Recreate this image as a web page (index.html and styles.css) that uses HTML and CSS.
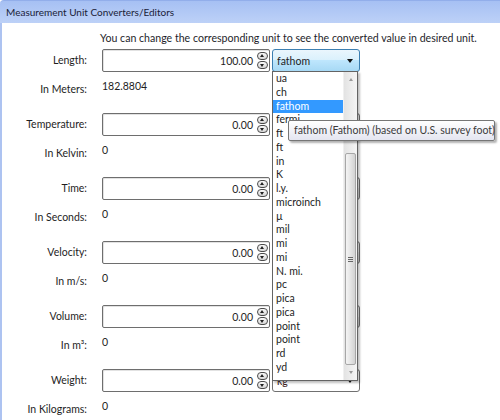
FILE: index.html
```html
<!DOCTYPE html>
<html>
<head>
<meta charset="utf-8">
<link rel="stylesheet" href="styles.css">
</head>
<body>
<div class="window">
  <div class="titlebar">Measurement Unit Converters/Editors</div>
  <div class="content">
    <p class="hint">You can change the corresponding unit to see the converted value in desired unit.</p>
    <div class="form">
      <div class="label">Length:</div>
      <div class="numbox"><span class="val">100.00</span><span class="spin"><span class="sbtn up"></span><span class="sbtn dn"></span></span></div>
      <div class="combo active"><span class="ctext">fathom</span><span class="arrow"></span></div>
      <div class="label sub">In Meters:</div>
      <div class="result">182.8804</div>
      <div></div>

      <div class="label">Temperature:</div>
      <div class="numbox"><span class="val">0.00</span><span class="spin"><span class="sbtn up"></span><span class="sbtn dn"></span></span></div>
      <div class="combo"><span class="ctext"></span><span class="arrow"></span></div>
      <div class="label sub">In Kelvin:</div>
      <div class="result">0</div>
      <div></div>

      <div class="label">Time:</div>
      <div class="numbox"><span class="val">0.00</span><span class="spin"><span class="sbtn up"></span><span class="sbtn dn"></span></span></div>
      <div class="combo"><span class="ctext"></span><span class="arrow"></span></div>
      <div class="label sub">In Seconds:</div>
      <div class="result">0</div>
      <div></div>

      <div class="label">Velocity:</div>
      <div class="numbox"><span class="val">0.00</span><span class="spin"><span class="sbtn up"></span><span class="sbtn dn"></span></span></div>
      <div class="combo"><span class="ctext"></span><span class="arrow"></span></div>
      <div class="label sub">In m/s:</div>
      <div class="result">0</div>
      <div></div>

      <div class="label">Volume:</div>
      <div class="numbox"><span class="val">0.00</span><span class="spin"><span class="sbtn up"></span><span class="sbtn dn"></span></span></div>
      <div class="combo"><span class="ctext"></span><span class="arrow"></span></div>
      <div class="label sub">In m³:</div>
      <div class="result">0</div>
      <div></div>

      <div class="label">Weight:</div>
      <div class="numbox"><span class="val">0.00</span><span class="spin"><span class="sbtn up"></span><span class="sbtn dn"></span></span></div>
      <div class="combo low"><span class="ctext kg">kg</span><span class="arrow"></span></div>
      <div class="label sub">In Kilograms:</div>
      <div class="result">0</div>
      <div></div>
    </div>
  </div>

  <div class="dropdown">
    <ul class="items">
      <li>ua</li>
      <li>ch</li>
      <li class="sel">fathom</li>
      <li>fermi</li>
      <li>ft</li>
      <li>ft</li>
      <li>in</li>
      <li>K</li>
      <li>l.y.</li>
      <li>microinch</li>
      <li>µ</li>
      <li>mil</li>
      <li>mi</li>
      <li>mi</li>
      <li>N. mi.</li>
      <li>pc</li>
      <li>pica</li>
      <li>pica</li>
      <li>point</li>
      <li>point</li>
      <li>rd</li>
      <li>yd</li>
    </ul>
    <div class="scrollbar">
      <div class="sarrow"><span class="tri-up"></span></div>
      <div class="strack"></div>
      <div class="thumb"><span class="grip"></span></div>
      <div class="sarrow"><span class="tri-dn"></span></div>
    </div>
  </div>

  <div class="tooltip">fathom (Fathom) (based on U.S. survey foot)</div>
</div>
</body>
</html>
```

FILE: styles.css
```css
* { box-sizing: border-box; }

body {
  margin: 0;
  background: #fff;
  font-family: "Lato", "Open Sans", sans-serif;
  font-size: 10.5px;
  color: #1e1e1e;
}

.window {
  position: relative;
  width: 500px;
  height: 420px;
  overflow: hidden;
}

.titlebar {
  height: 23px;
  line-height: 22px;
  padding-left: 6px;
  border-top-left-radius: 4px;
  border-top: 1px solid #92aeea;
  background: linear-gradient(#a6c0f3, #bdd1f7);
  color: #1a2238;
  white-space: nowrap;
  font-size: 10px;
}

.content {
  border-left: 2px solid #adc3f1;
  height: 397px;
}

.hint {
  margin: 0;
  padding: 8px 0 4px 98px;
  line-height: 14px;
  white-space: nowrap;
  color: #1e1e2a;
  font-size: 10.6px;
}

.form {
  display: grid;
  grid-template-columns: 100px 168px 90px;
  grid-template-rows: repeat(6, 23px 41px);
}

.label {
  text-align: right;
  padding-right: 15px;
  line-height: 23px;
  white-space: nowrap;
}

.label.sub {
  line-height: 14px;
  padding-top: 10px;
}

.result {
  line-height: 14px;
  padding-top: 7px;
}

.numbox {
  display: flex;
  align-items: center;
  justify-content: flex-end;
  height: 23px;
  border: 1px solid #6e6e6e;
  border-radius: 2px;
  background: #fff;
  box-shadow: inset 1px 1px 0 #e2e2e2;
  padding-right: 1px;
}

.val {
  padding-right: 4px;
}

.spin {
  display: flex;
  flex-direction: column;
  width: 11px;
  gap: 1px;
}

.sbtn {
  position: relative;
  display: block;
  height: 8px;
  border: 1px solid #4b4b4b;
  border-radius: 4px;
  background: linear-gradient(#fafafa, #d6d6d6);
}

.sbtn::after {
  content: "";
  position: absolute;
  left: 2px;
  width: 0;
  height: 0;
  border-left: 2.5px solid transparent;
  border-right: 2.5px solid transparent;
}

.sbtn.up::after {
  top: 1px;
  border-bottom: 3px solid #222;
}

.sbtn.dn::after {
  top: 2px;
  border-top: 3px solid #222;
}

.combo {
  margin-left: 2px;
  height: 23px;
  display: flex;
  align-items: center;
  justify-content: space-between;
  padding: 0 6px 0 4px;
  border: 1px solid #707070;
  border-radius: 3px;
  background: linear-gradient(#f2f2f2, #ebebeb 50%, #dddddd 50%, #cfcfcf);
}

.combo.low {
  background: #fff;
  align-items: flex-end;
  padding-bottom: 3px;
}

.combo.active {
  border-color: #3c7fb1;
  background: linear-gradient(#eaf6fd, #d9f0fc 50%, #bee6fd 50%, #a7d9f5);
  align-items: center;
}

.ctext.kg { color: #3a2020; line-height: 14px; }

.combo.low .arrow { margin-bottom: 5px; }

.arrow {
  width: 0;
  height: 0;
  border-left: 3.5px solid transparent;
  border-right: 3.5px solid transparent;
  border-top: 4px solid #111;
}

.dropdown {
  position: absolute;
  left: 272px;
  top: 71px;
  width: 86px;
  height: 310px;
  display: flex;
  background: #fff;
  border: 1px solid #646464;
  box-shadow: 2px 2px 2px rgba(0, 0, 0, 0.25);
}

.items {
  flex: 1;
  margin: 0;
  padding: 0;
  list-style: none;
}

.items li {
  height: 13.75px;
  line-height: 13.75px;
  padding-left: 3px;
  white-space: nowrap;
  color: #1e1e1e;
}

.items li.sel {
  background: #3399ff;
  color: #fff;
}

.scrollbar {
  width: 14px;
  display: flex;
  flex-direction: column;
  background: linear-gradient(90deg, #e3e3e3, #f5f5f5);
  border-left: 1px solid #f0f0f0;
}

.sarrow {
  height: 15px;
  display: flex;
  align-items: center;
  justify-content: center;
}

.tri-up, .tri-dn {
  width: 0;
  height: 0;
  border-left: 2.5px solid transparent;
  border-right: 2.5px solid transparent;
}

.tri-up { border-bottom: 3px solid #9a9a9a; }
.tri-dn { border-top: 3px solid #9a9a9a; }

.strack { height: 66px; }

.thumb {
  height: 212px;
  margin: 0 1px;
  border: 1px solid #a7a7a7;
  border-radius: 2px;
  background: linear-gradient(90deg, #f4f4f4, #e6e6e6 45%, #d2d2d2);
  display: flex;
  align-items: center;
  justify-content: center;
}

.grip {
  width: 5px;
  height: 5px;
  border-top: 1px solid #666;
  border-bottom: 1px solid #666;
  position: relative;
}

.grip::after {
  content: "";
  position: absolute;
  left: 0;
  right: 0;
  top: 1px;
  border-top: 1px solid #666;
}

.tooltip {
  position: absolute;
  left: 288px;
  top: 120px;
  width: 207px;
  height: 21px;
  line-height: 19px;
  padding-left: 5px;
  white-space: nowrap;
  color: #3b3b3b;
  border: 1px solid #767676;
  border-radius: 2px;
  background: linear-gradient(#ffffff, #e4e5f0);
  box-shadow: 2px 2px 2px rgba(0, 0, 0, 0.3);
}
```
